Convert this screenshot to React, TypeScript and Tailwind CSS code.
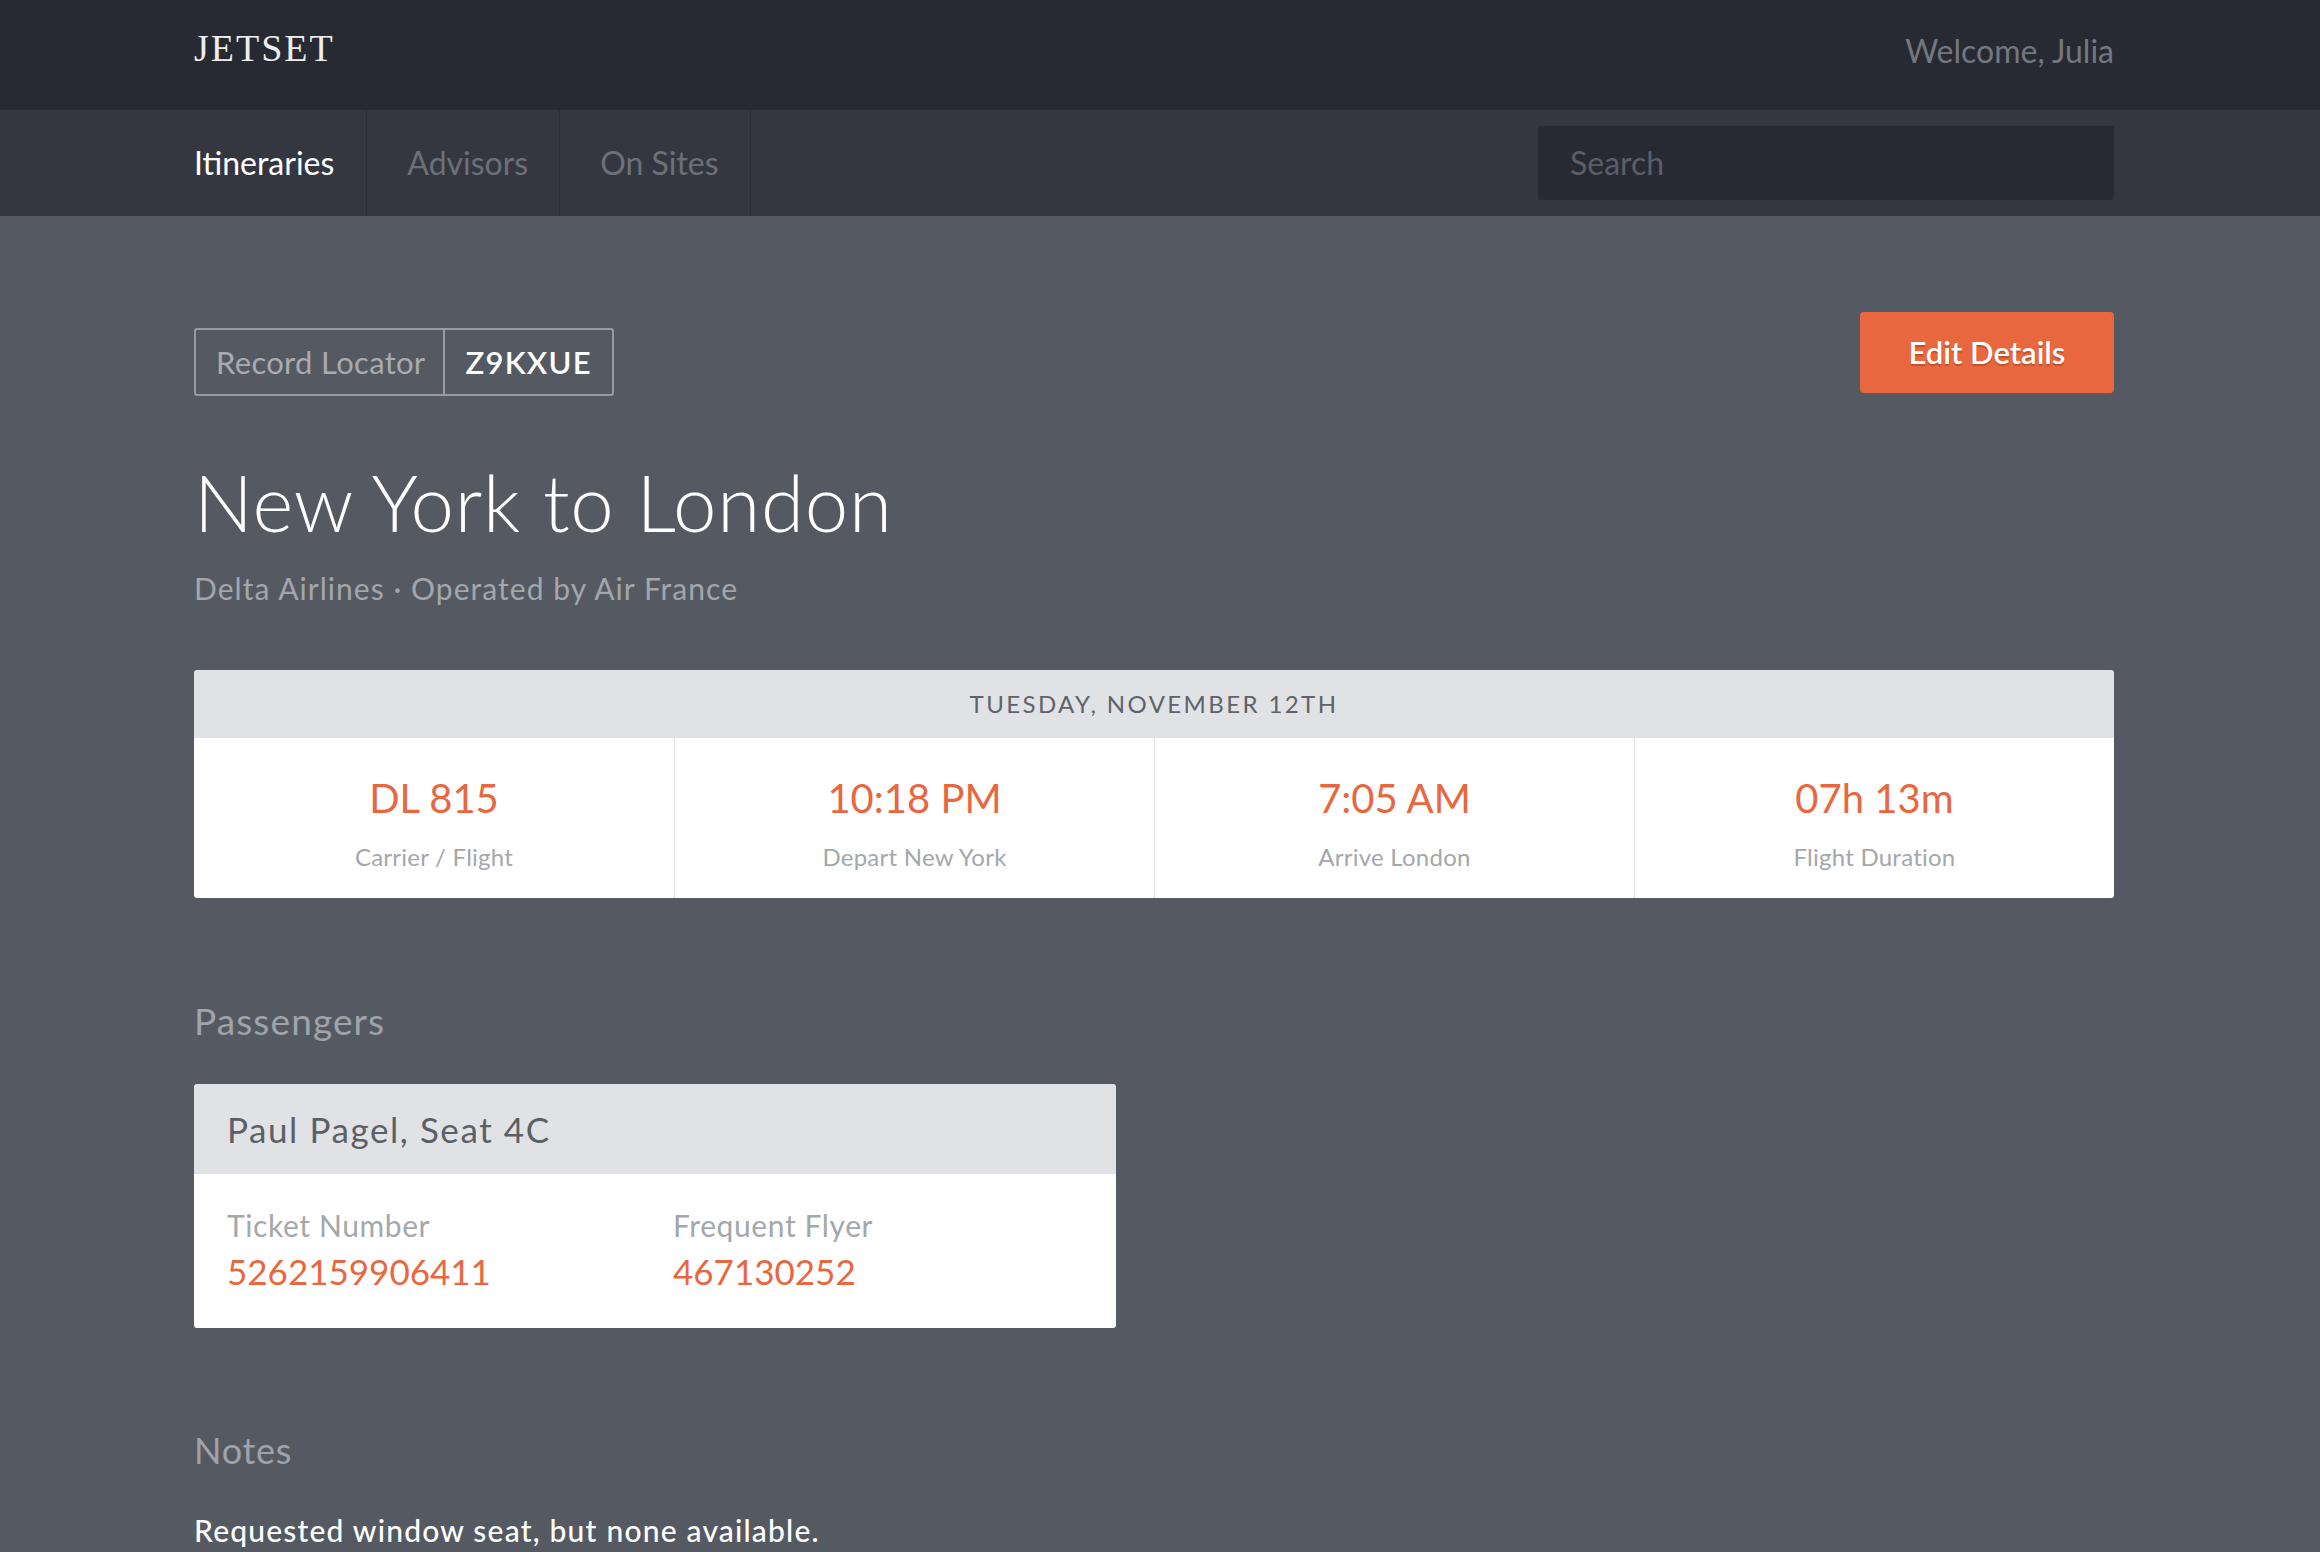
const flight = [
  { value: 'DL 815', label: 'Carrier / Flight' },
  { value: '10:18 PM', label: 'Depart New York' },
  { value: '7:05 AM', label: 'Arrive London' },
  { value: '07h 13m', label: 'Flight Duration' },
]

const navItems = ['Itineraries', 'Advisors', 'On Sites']

function TopBar() {
  return (
    <div className="h-[110px] bg-[#272a33]">
      <div className="ml-[194px] w-[1920px] flex items-start justify-between">
        <div className="mt-[29px] text-[38px] leading-none tracking-[2px] text-[#eeeeee] font-[Liberation_Serif,serif]">
          JETSET
        </div>
        <div className="mt-[35px] text-[32px] leading-none text-[#74777f]">Welcome, Julia</div>
      </div>
    </div>
  )
}

function NavBar() {
  return (
    <div className="h-[106px] bg-[#343740]">
      <div className="ml-[194px] w-[1920px] h-full flex items-center justify-between">
        <nav className="flex h-full">
          {navItems.map((item, i) => (
            <a
              key={item}
              className={
                i === 0
                  ? 'flex items-center h-full pr-[32px] border-r border-[#2b2e36] text-[32px] text-white'
                  : 'flex items-center h-full pl-[40px] pr-[31px] border-r border-[#2b2e36] text-[32px] text-[#6d7078]'
              }
            >
              {item}
            </a>
          ))}
        </nav>
        <div className="w-[576px] h-[74px] rounded-[3px] bg-[#272a33] flex items-center pl-[32px] text-[32px] text-[#5b5e66]">
          Search
        </div>
      </div>
    </div>
  )
}

export default function App() {
  return (
    <div className="min-h-screen bg-[#555a62] font-[Lato,sans-serif]">
      <TopBar />
      <NavBar />

      <main className="ml-[194px] w-[1920px] pt-[96px] pb-[60px]">
        {/* Header row */}
        <div className="flex items-start justify-between">
          <div className="mt-[16px] flex h-[68px] rounded-[3px] border-2 border-[#989ba0] text-[31px] leading-none">
            <div className="flex items-center pl-[20px] pr-[18px] tracking-[0.01em] text-[#a8abaf]">Record Locator</div>
            <div className="flex items-center px-[20px] border-l-2 border-[#989ba0] tracking-[0.04em] text-white font-semibold">
              Z9KXUE
            </div>
          </div>
          <button className="w-[254px] h-[81px] rounded-[4px] bg-[#e9673f] text-white text-[31px] font-semibold [text-shadow:0_2px_1px_rgba(120,40,10,0.35)]">
            Edit Details
          </button>
        </div>

        <h1 className="mt-[67px] text-[78px] leading-none font-light tracking-[0.01em] text-white">
          New York to London
        </h1>
        <p className="mt-[32px] text-[30px] leading-none tracking-[0.035em] text-[#a3a6ab]">
          Delta Airlines · Operated by Air France
        </p>

        {/* Flight card */}
        <div className="mt-[67px] rounded-[3px] overflow-hidden">
          <div className="h-[68px] bg-[#e1e2e6] flex items-center justify-center text-[24px] leading-none tracking-[0.1em] text-[#5e6269]">
            TUESDAY, NOVEMBER 12TH
          </div>
          <div className="h-[160px] bg-white grid grid-cols-4">
            {flight.map((f, i) => (
              <div
                key={f.label}
                className={
                  i === 0
                    ? 'flex flex-col items-center pt-[40px]'
                    : 'flex flex-col items-center pt-[40px] border-l border-[#e2e3e5]'
                }
              >
                <div className="text-[40px] leading-none text-[#e9673f]">{f.value}</div>
                <div className="mt-[27px] text-[24px] leading-none tracking-[0.01em] text-[#a4a7ab]">{f.label}</div>
              </div>
            ))}
          </div>
        </div>

        {/* Passengers */}
        <h2 className="mt-[104px] text-[37px] leading-none tracking-[0.03em] text-[#a0a3a8]">Passengers</h2>
        <div className="mt-[45px] w-[922px] rounded-[3px] overflow-hidden">
          <div className="h-[90px] bg-[#e1e2e6] flex items-center px-[33px] text-[35px] leading-none tracking-[0.045em] text-[#5b5f66]">
            Paul Pagel, Seat 4C
          </div>
          <div className="h-[154px] bg-white px-[33px] pt-[36px] grid grid-cols-[446px_1fr]">
            <div>
              <div className="text-[30px] leading-none tracking-[0.02em] text-[#a4a7ab]">Ticket Number</div>
              <div className="mt-[14px] text-[35px] leading-none text-[#e9673f]">5262159906411</div>
            </div>
            <div>
              <div className="text-[30px] leading-none tracking-[0.02em] text-[#a4a7ab]">Frequent Flyer</div>
              <div className="mt-[14px] text-[35px] leading-none text-[#e9673f]">467130252</div>
            </div>
          </div>
        </div>

        {/* Notes */}
        <h2 className="mt-[104px] text-[36px] leading-none tracking-[0.02em] text-[#a0a3a8]">Notes</h2>
        <p className="mt-[47px] text-[30px] leading-none font-medium tracking-[0.04em] text-white">
          Requested window seat, but none available.
        </p>
      </main>
    </div>
  )
}
